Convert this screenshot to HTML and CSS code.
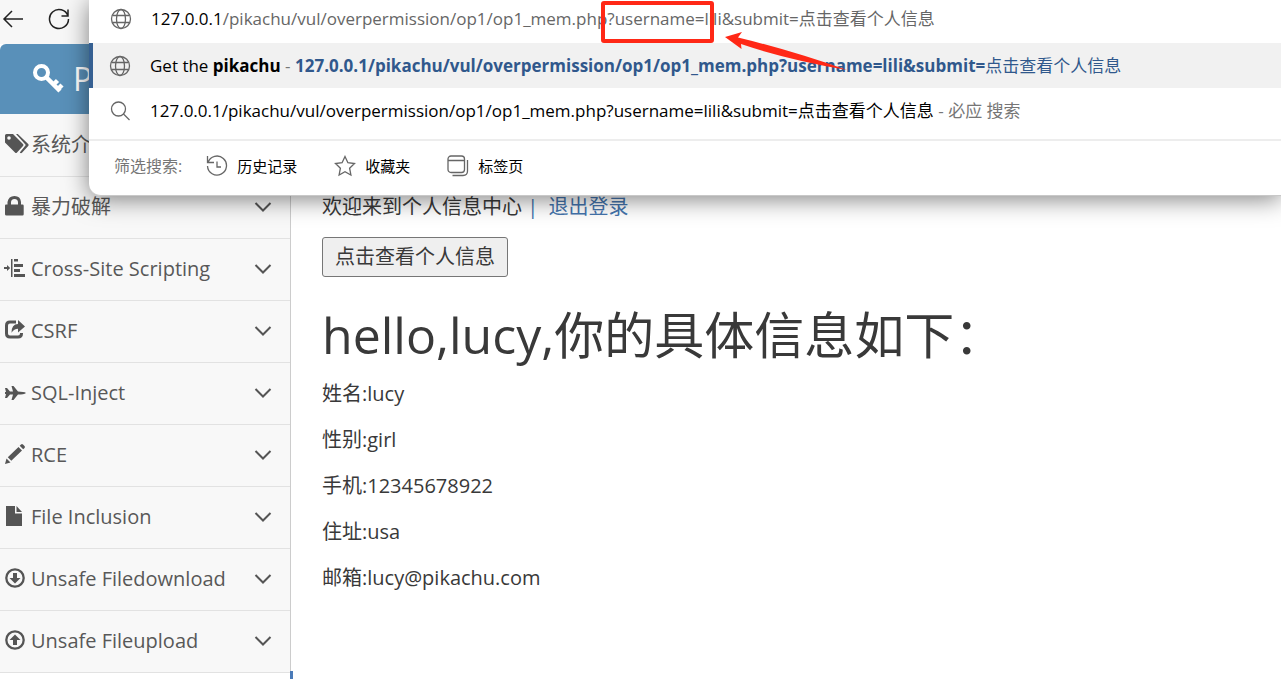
FILE: index.html
```html
<!DOCTYPE html>
<html lang="zh-CN">
<head>
<meta charset="utf-8">
<title>Get the pikachu</title>
<link rel="stylesheet" href="styles.css">
</head>
<body>
<div class="toolbar">
  <button class="tool" aria-label="返回"><svg width="22" height="22" viewBox="0 0 22 22" class="line"><path d="M21 11H2M10 3l-8 8 8 8"/></svg></button>
  <button class="tool" aria-label="刷新"><svg width="22" height="22" viewBox="0 0 22 22" class="line"><path d="M20 8A9.5 9.5 0 1 0 20.500 11M20 1.500V8h-6.500"/></svg></button>
</div>
<header class="navbar">
  <a class="brand" href="#"><svg width="32" height="30" viewBox="0 0 32 30" fill="none" stroke="#fff" stroke-width="4"><circle cx="9.500" cy="8.500" r="6.500"/><path d="M14 13l14 14M21.500 20.500l4-4M26 25l4-4" stroke-width="4.500"/></svg><span>P</span></a>
</header>
<div class="layout">
  <nav class="sidebar">
    <a class="item" href="#"><svg class="icon wide" viewBox="0 0 26 22"><path d="M1 2.500Q1 1 2.500 1H9l10 10q1 1 0 2l-6 6.500q-1 1-2 0L1 9.500z"/><circle cx="5" cy="5" r="1.800" fill="#f8f8f8"/><path d="M12 1h1.800l10.400 10q1 1 0 2L18 19.800q-1.200.8-2.200-.3L21.800 12z"/></svg><span>系统介</span></a>
    <a class="item" href="#"><svg class="icon" viewBox="0 0 22 22"><path d="M2 9.500h1.500V7Q4.500 1 10.500 1T17 7v2.500h1.500q1.200 0 1.200 1.200v8.600q0 1.200-1.200 1.200h-16Q1 20.500 1 19.300v-8.600q0-1.200 1-1.200zM7 9.500h7V7.500Q14 4 10.500 4T7 7.500z"/></svg><span>暴力破解</span><svg class="chev" viewBox="0 0 18 12"><path d="M1.500 2L9 9.500 16.500 2"/></svg></a>
    <a class="item" href="#"><svg class="icon" viewBox="0 0 22 22"><path d="M7 2h1.500v18H7zM0 10h3V8l3.200 3L3 14v-2H0zM10 2h4v2.500h-4zM10 7h9v3h-9zM10 12h6v3h-6zM10 17h11v3H10z"/></svg><span>Cross-Site Scripting</span><svg class="chev" viewBox="0 0 18 12"><path d="M1.500 2L9 9.500 16.500 2"/></svg></a>
    <a class="item" href="#"><svg class="icon" viewBox="0 0 22 22"><path d="M12 3H6Q2.500 3 2.500 6.500v8Q2.500 18 6 18h8q3.500 0 3.500-3.500V14" fill="none" stroke="#555" stroke-width="3"/><path d="M14 1l7 6.500-7 6v-3.800q-4 0-6.500 4Q7.500 5 14 5z"/></svg><span>CSRF</span><svg class="chev" viewBox="0 0 18 12"><path d="M1.500 2L9 9.500 16.500 2"/></svg></a>
    <a class="item" href="#"><svg class="icon" viewBox="0 0 22 22"><path d="M1 7h2l3 3.500h3L7.500 5h2L14 10.500q6 0 8 1.500-2 1.500-8 1.500L9.500 19h-2L9 13.500H6L3 17H1l1-4H1v-2h1z"/></svg><span>SQL-Inject</span><svg class="chev" viewBox="0 0 18 12"><path d="M1.500 2L9 9.500 16.500 2"/></svg></a>
    <a class="item" href="#"><svg class="icon" viewBox="0 0 22 22"><path d="M1 21l1.500-5.500L6.500 19.500zM3.800 14.300L14.500 4l3.500 3.500L7.300 17.800zM15.700 2.800L17 1.500q1-1 2 0l1.500 1.500q1 1 0 2l-1.300 1.300z"/></svg><span>RCE</span><svg class="chev" viewBox="0 0 18 12"><path d="M1.500 2L9 9.500 16.500 2"/></svg></a>
    <a class="item" href="#"><svg class="icon" viewBox="0 0 22 22"><path d="M2 1h9v7.500h7V21H2zM12.500 1L18 7h-5.500z"/></svg><span>File Inclusion</span><svg class="chev" viewBox="0 0 18 12"><path d="M1.500 2L9 9.500 16.500 2"/></svg></a>
    <a class="item" href="#"><svg class="icon" viewBox="0 0 22 22"><circle cx="11" cy="11" r="8.700" fill="none" stroke="#555" stroke-width="2.300"/><path d="M9 6h4v5h3.500L11 16.500 5.500 11H9z"/></svg><span>Unsafe Filedownload</span><svg class="chev" viewBox="0 0 18 12"><path d="M1.500 2L9 9.500 16.500 2"/></svg></a>
    <a class="item" href="#"><svg class="icon" viewBox="0 0 22 22"><circle cx="11" cy="11" r="8.700" fill="none" stroke="#555" stroke-width="2.300"/><path d="M9 16h4v-5h3.500L11 5.500 5.500 11H9z"/></svg><span>Unsafe Fileupload</span><svg class="chev" viewBox="0 0 18 12"><path d="M1.500 2L9 9.500 16.500 2"/></svg></a>
  </nav>
  <main class="content">
    <p class="welcome">欢迎来到个人信息中心 <a href="#">| &nbsp;退出登录</a></p>
    <button class="view">点击查看个人信息</button>
    <h1>hello,lucy,你的具体信息如下：</h1>
    <p>姓名:lucy</p>
    <p>性别:girl</p>
    <p>手机:12345678922</p>
    <p>住址:usa</p>
    <p>邮箱:lucy@pikachu.com</p>
  </main>
</div>
<div class="footer"></div>

<section class="popup">
  <div class="row address">
    <svg class="sym" viewBox="0 0 22 22"><circle cx="11" cy="11" r="9.500"/><ellipse cx="11" cy="11" rx="4.500" ry="9.500"/><path d="M2.500 7.500h17M2.500 14.500h17"/></svg>
    <div class="url" role="textbox" contenteditable="true" aria-label="地址栏"><b>127.0.0.1</b>/pikachu/vul/overpermission/op1/op1_mem.php?username=lili&amp;submit=点击查看个人信息</div>
  </div>
  <a class="row active" href="#">
    <svg class="sym" viewBox="0 0 22 22"><circle cx="11" cy="11" r="9.500"/><ellipse cx="11" cy="11" rx="4.500" ry="9.500"/><path d="M2.500 7.500h17M2.500 14.500h17"/></svg>
    <span>Get the <strong>pikachu</strong> <i>-</i> <span class="match"><strong>127.0.0.1/pikachu/vul/overpermission/op1/op1_mem.php?username=lili&amp;submit=</strong>点击查看个人信息</span></span>
  </a>
  <a class="row last" href="#">
    <svg class="sym" viewBox="0 0 22 22"><circle cx="9.500" cy="9" r="7"/><path d="M14.500 14l6 6"/></svg>
    <span>127.0.0.1/pikachu/vul/overpermission/op1/op1_mem.php?username=lili&amp;submit=点击查看个人信息 <i>- 必应 搜索</i></span>
  </a>
  <div class="filters">
    <span class="caption">筛选搜索:</span>
    <button><svg class="sym" viewBox="0 0 22 22"><path d="M2 7.500A9.500 9.500 0 1 1 1.500 11M1.500 1v6.500H8M11 6.500V12h4"/></svg>历史记录</button>
    <button><svg class="sym" viewBox="0 0 22 22"><path d="M11 1.500l2.900 6.200 6.600.8-4.900 4.700 1.300 6.800L11 16.700 5.100 20l1.300-6.800L1.500 8.500l6.600-.8z"/></svg>收藏夹</button>
    <button><svg class="sym" viewBox="0 0 22 22"><rect x="1" y="1" width="16.500" height="16.500" rx="3"/><path d="M1 5.500h16.500M20.500 5v11q0 4.500-4.500 4.500H5.500"/></svg>标签页</button>
  </div>
</section>
<div class="mark"></div>
<svg class="arrow" width="122" height="42" viewBox="0 0 122 42"><path d="M0 6L17 1l-4 5.500Q65 19 122 39 60 28 16 13l.5 5z" fill="#ff2816"/></svg>
</body>
</html>
```
FILE: styles.css
```css
* { box-sizing: border-box; }
body {
  margin: 0;
  min-height: 100vh;
  overflow: hidden;
  position: relative;
  background: #fff;
  color: #393939;
  font: 20px/30px "Open Sans", "Noto Sans CJK SC", sans-serif;
}
a { color: #4474ad; text-decoration: none; }
button { font: inherit; color: inherit; }
p { margin: 0 0 16px; }
svg { flex: none; }

.toolbar { display: flex; gap: 24px; height: 44px; padding: 8px 2px; background: #f7f7f7; }
.tool { display: flex; padding: 0; border: 0; background: none; }
.line { fill: none; stroke: #222; stroke-width: 1.5; }

.navbar { height: 70px; background: #5990b9; border-top-left-radius: 6px; }
.brand { display: flex; align-items: center; gap: 9px; height: 70px; padding-left: 32px; color: #fff; font-size: 32px; }

.layout { display: flex; }
.sidebar { flex: none; width: 291px; padding-top: 1px; background: #f8f8f8; border-right: 1px solid #ccc; }
.item {
  display: flex;
  align-items: center;
  height: 62px;
  padding: 0 18px 2px 4px;
  gap: 5px;
  border-bottom: 1px solid #e2e2e2;
  color: #585858;
}
.icon { width: 22px; height: 22px; margin-bottom: 2px; fill: #555; }
.icon.wide { width: 26px; margin-right: -4px; }
.chev { width: 18px; height: 12px; margin-left: auto; fill: none; stroke: #555; stroke-width: 2; }

.content { flex: 1; padding: 78px 31px 0; }
.content .welcome { margin-bottom: 15px; }
.view {
  display: block;
  height: 40px;
  padding: 0 12px;
  border: 1px solid #767676;
  border-radius: 3px;
  background: #efefef;
}
h1 { margin: 22px 0 8px; font-size: 50px; line-height: 72px; font-weight: 400; }
.footer { width: 3px; height: 8px; margin: -2px 0 0 290px; background: #4a7ab8; position: relative; }

.popup {
  position: absolute;
  top: 0;
  left: 89px;
  right: 0;
  background: #fff;
  border-bottom: 1px solid #c8c8c8;
  border-bottom-left-radius: 12px;
  box-shadow: 0 3px 24px rgba(0, 0, 0, .5);
  color: #000;
  font-size: 17px;
  line-height: 24px;
}
.row { display: flex; align-items: center; height: 45px; padding-left: 21px; gap: 19px; color: #000; white-space: nowrap; }
.address { height: 43px; padding: 0 0 6px 21px; color: #666; }
.url { outline: 0; }
.url b { font-weight: 400; color: #000; }
.active { padding-left: 16px; border-left: 4px solid #366092; background: #f1f1f1; }
.last { padding-left: 20px; }
.sym { width: 22px; height: 22px; fill: none; stroke: #666; stroke-width: 1.3; }
.match { color: #30588c; }
.row i { font-style: normal; color: #767676; }
.filters {
  display: flex;
  align-items: center;
  height: 56px;
  margin-top: 6px;
  padding: 0 0 4px 25px;
  border-top: 2px solid #ededed;
  font-size: 15px;
}
.filters button { display: flex; align-items: center; gap: 9px; padding: 0; border: 0; background: none; margin-right: 37px; }
.caption { margin-right: 24px; font-size: 16px; color: #767676; }

.mark { position: absolute; top: 1px; left: 601px; width: 113px; height: 42px; border: 4px solid #ff2816; border-radius: 3px; }
.arrow { position: absolute; top: 31px; left: 725px; }
```
